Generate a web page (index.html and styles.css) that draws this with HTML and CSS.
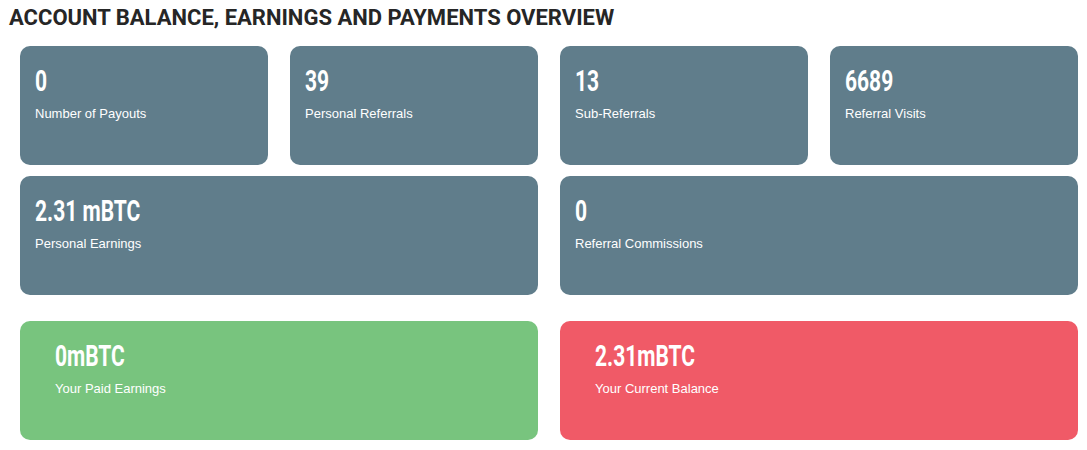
FILE: index.html
```html
<!DOCTYPE html>
<html>
<head>
<meta charset="utf-8">
<link rel="stylesheet" href="styles.css">
</head>
<body>
<h2 class="title">ACCOUNT BALANCE, EARNINGS AND PAYMENTS OVERVIEW</h2>
<div class="grid">
  <div class="card grey"><div class="num">0</div><div class="label">Number of Payouts</div></div>
  <div class="card grey"><div class="num">39</div><div class="label">Personal Referrals</div></div>
  <div class="card grey"><div class="num">13</div><div class="label">Sub-Referrals</div></div>
  <div class="card grey"><div class="num">6689</div><div class="label">Referral Visits</div></div>
  <div class="card grey wide"><div class="num">2.31 mBTC</div><div class="label">Personal Earnings</div></div>
  <div class="card grey wide"><div class="num">0</div><div class="label">Referral Commissions</div></div>
</div>
<div class="grid bottom">
  <div class="card green wide inset"><div class="num">0mBTC</div><div class="label">Your Paid Earnings</div></div>
  <div class="card red wide inset"><div class="num">2.31mBTC</div><div class="label">Your Current Balance</div></div>
</div>
</body>
</html>
```
FILE: styles.css
```css
html, body { margin: 0; padding: 0; background: #fff; }
body { font-family: "Liberation Sans", Arial, sans-serif; }
.title {
  margin: 0;
  padding: 5px 0 0 9px;
  height: 40px;
  box-sizing: border-box;
  font-family: Roboto, "Liberation Sans", sans-serif;
  font-weight: 700;
  font-size: 22px;
  line-height: 26px;
  color: #262626;
}
.grid {
  display: grid;
  grid-template-columns: repeat(4, 248px);
  column-gap: 22px;
  row-gap: 11px;
  padding: 6px 0 0 20px;
}
.grid.bottom { padding-top: 26px; }
.card {
  height: 119px;
  border-radius: 10px;
  box-sizing: border-box;
  padding: 17px 15px 0;
  color: #fff;
}
.card.wide { grid-column: span 2; }
.card.inset { padding-left: 35px; }
.grey { background: #607d8b; }
.green { background: #78c47e; }
.red { background: #f05a67; }
.num {
  font-family: Roboto, "Liberation Sans", sans-serif;
  font-weight: 700;
  font-size: 30px;
  line-height: 36px;
  transform: scaleX(0.7);
  transform-origin: left center;
  white-space: nowrap;
}
.label {
  margin-top: 7px;
  font-size: 13px;
  line-height: 16px;
}
```
